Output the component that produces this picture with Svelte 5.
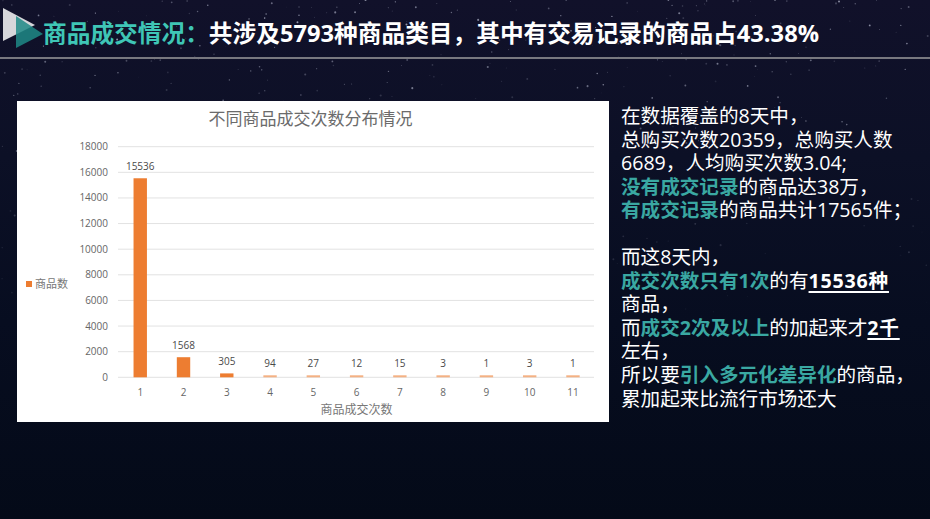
<script>
  const counts = [15536, 1568, 305, 94, 27, 12, 15, 3, 1, 3, 1]
  const ticks = [18000, 16000, 14000, 12000, 10000, 8000, 6000, 4000, 2000, 0]

  // chart geometry, in svg coords (svg sits at card's top left)
  const left = 101
  const right = 577
  const base = 276.3
  const scale = 230.6 / 18000
  const band = (right - left) / counts.length

  const bars = counts.map((n, i) => {
    const h = Math.max(n * scale, 2)
    return {
      n,
      label: i + 1,
      cx: left + 0.6 + band * (i + 0.5),
      h,
      faint: n < 100
    }
  })

  // fixed seed so the star field stays the same
  let seed = 41
  function rnd() {
    seed = (seed * 16807) % 2147483647
    return seed / 2147483647
  }
  const stars = Array.from({ length: 560 }, () => {
    const y = Math.pow(rnd(), 1.4) * 320
    return {
      x: rnd() * 930,
      y,
      r: 0.35 + rnd() * 0.7,
      o: (0.15 + rnd() * 0.6) * (1 - y / 340)
    }
  })
</script>

<div class="page">
  <svg class="stars" width="930" height="519" aria-hidden="true">
    {#each stars as s}
      <circle cx={s.x} cy={s.y} r={s.r} fill="#cfd3e6" opacity={s.o} />
    {/each}
  </svg>

  <header>
    <svg class="logo" width="46" height="50" viewBox="0 0 46 50">
      <polygon points="3,6 35,23 3,39" fill="#d6d6da" />
      <polygon points="16,14 43,32 16,46" fill="#1f8a86" opacity="0.85" />
    </svg>
    <h1><span class="teal">商品成交情况：</span>共涉及5793种商品类目，其中有交易记录的商品占43.38%</h1>
  </header>

  <main>
    <section class="card">
      <svg width="592" height="321" viewBox="0 0 592 321">
        <text class="title" x="293.500" y="24" text-anchor="middle">不同商品成交次数分布情况</text>

        {#each ticks as t}
          {@const y = base - t * scale}
          <line x1={left} x2={right} y1={y} y2={y} stroke="#e2e2e2" stroke-width="1" />
          <text class="axis" x="91" y={y + 3.500} text-anchor="end">{t}</text>
        {/each}

        {#each bars as b}
          <rect
            x={b.cx - 6.7}
            y={base - b.h}
            width="13.400"
            height={b.h}
            fill={b.faint ? '#f4b183' : '#ed7d31'}
          />
          <text class="value" x={b.cx} y={base - b.h - 8} text-anchor="middle">{b.n}</text>
          <text class="axis" x={b.cx} y="295" text-anchor="middle">{b.label}</text>
        {/each}

        <text class="axis-title" x="339.500" y="313" text-anchor="middle">商品成交次数</text>

        <rect x="9" y="180" width="6" height="6" fill="#ed7d31" />
        <text class="legend" x="18" y="186.500">商品数</text>
      </svg>
    </section>

    <section class="notes">
      <p>
        在数据覆盖的8天中，<br />
        总购买次数20359，总购买人数<br />
        6689，人均购买次数3.04;<br />
        <b class="hl">没有成交记录</b>的商品达38万，<br />
        <b class="hl">有成交记录</b>的商品共计17565件；
      </p>
      <p>
        而这8天内，<br />
        <b class="hl">成交次数只有1次</b>的有<b class="key">15536种</b><br />
        商品，<br />
        而<b class="hl">成交2次及以上</b>的加起来才<b class="key">2千</b><br />
        左右，<br />
        所以要<b class="hl">引入多元化差异化</b>的商品，<br />
        累加起来比流行市场还大
      </p>
    </section>
  </main>
</div>

<style>
  :global(body) {
    margin: 0;
    background: #040a18;
  }

  .page {
    position: relative;
    width: 930px;
    height: 519px;
    overflow: hidden;
    background: linear-gradient(180deg, #11112a 0%, #0c1026 30%, #070d20 62%, #040a18 100%);
    font-family: "Open Sans", "Noto Sans CJK SC", sans-serif;
    color: #fff;
  }

  .stars {
    position: absolute;
    top: 0;
    left: 0;
  }

  header {
    position: relative;
    display: flex;
    align-items: center;
    height: 57px;
    border-bottom: 2px solid #78787f;
    box-sizing: content-box;
  }

  .logo {
    flex: none;
    margin-top: -3px;
    margin-right: -2px;
  }

  h1 {
    margin: 8px 0 0 -1px;
    font-size: 23.700px;
    line-height: 32px;
    font-weight: 700;
    white-space: nowrap;
  }

  .teal {
    color: #3fc6b6;
  }

  main {
    position: relative;
    display: flex;
    gap: 12px;
    padding: 42px 0 0 17px;
  }

  .card {
    flex: none;
    width: 592px;
    height: 321px;
    background: #fff;
  }

  .card svg {
    display: block;
  }

  .title {
    font-size: 17px;
    fill: #6b6b6b;
  }

  .axis {
    font-size: 10px;
    fill: #666;
  }

  .value {
    font-size: 10px;
    fill: #4a4a4a;
  }

  .axis-title {
    font-size: 12px;
    fill: #777;
  }

  .legend {
    font-size: 11px;
    fill: #777;
  }

  .notes {
    flex: none;
    width: 301px;
    padding-top: 3px;
    font-size: 19.600px;
    line-height: 23.550px;
  }

  .notes p {
    margin: 0 0 23.550px;
  }

  .hl {
    color: #3aa8a2;
    font-weight: 700;
  }

  .key {
    font-weight: 700;
    letter-spacing: 0.8px;
    text-decoration: underline;
    text-decoration-thickness: 1.5px;
    text-underline-offset: 3px;
  }
</style>
